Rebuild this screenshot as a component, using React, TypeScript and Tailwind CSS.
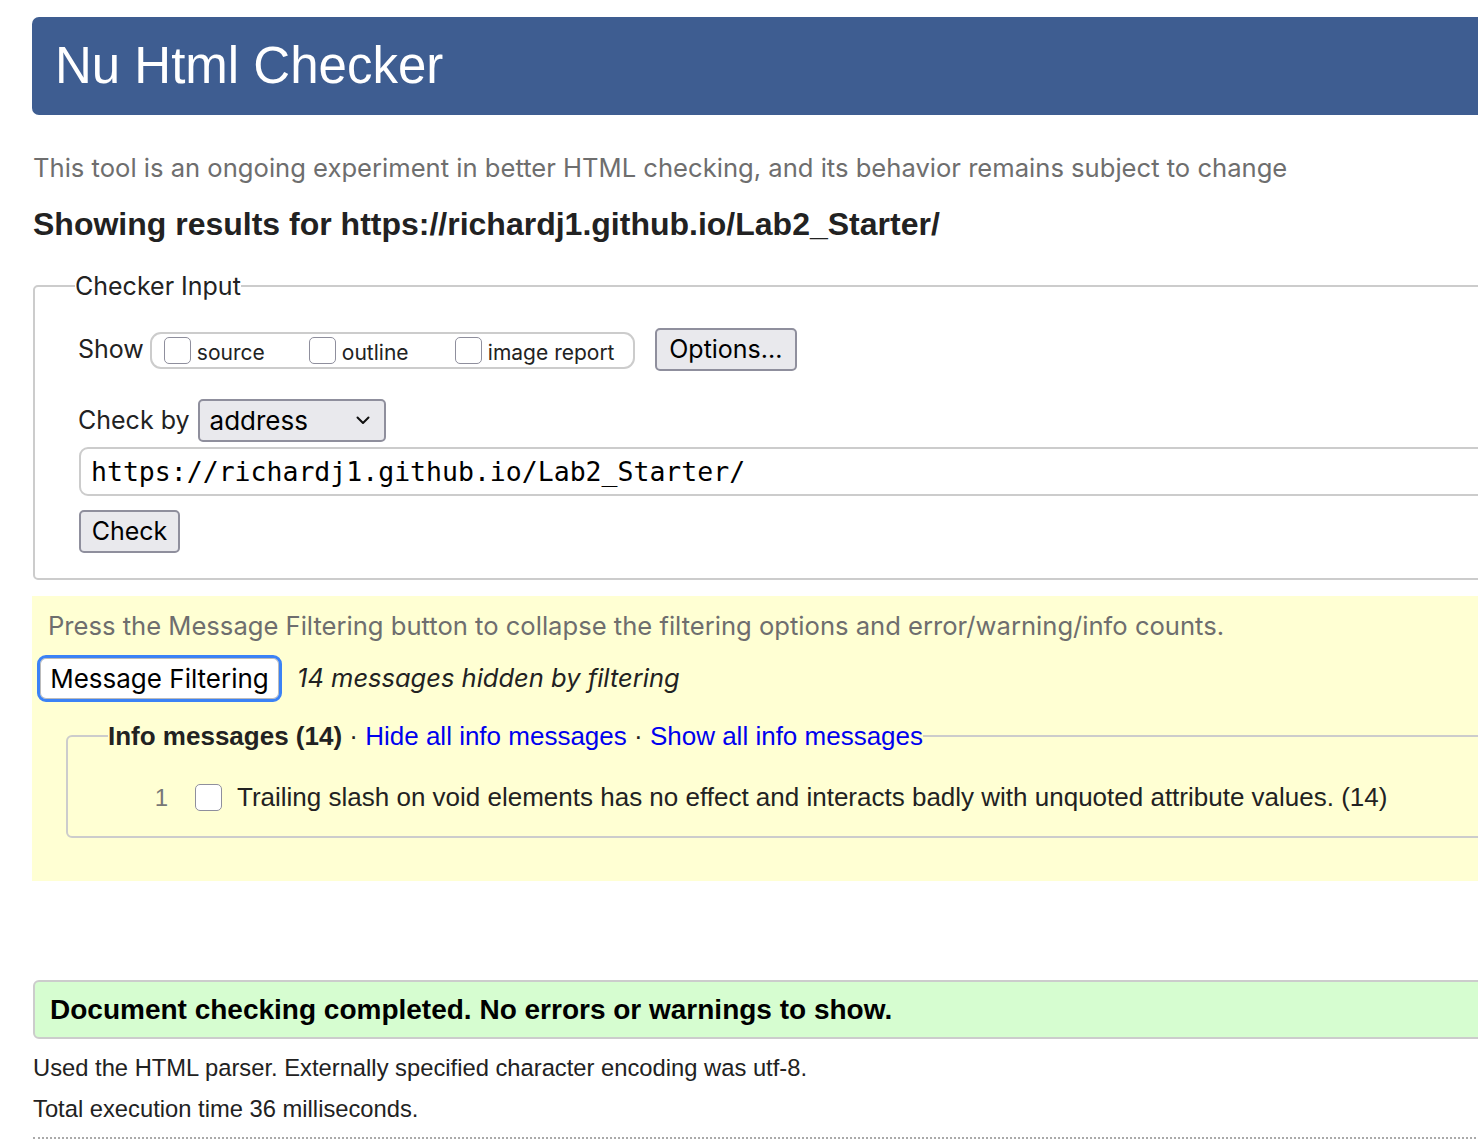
import React from "react";

const sans = "font-['Liberation_Sans',Arial,sans-serif]";
const ui = "font-['Inter','Noto_Sans',sans-serif]";

const Box = () => (
  <span className="inline-block w-[27px] h-[27px] rounded-[5px] border-[1.5px] border-[#8f8f9d] bg-white" />
);

const App = () => {
  return (
    <div className={`w-[1478px] h-[1140px] overflow-hidden bg-white text-[#222] ${sans}`}>
      <div className="w-[1560px] pl-[32px] pt-[17px]">
        <header className="h-[98px] rounded-[7px] bg-[#3e5d91] pl-[23px] flex items-center">
          <h1 className="text-[51px] text-white leading-none pb-[1px]">Nu Html Checker</h1>
        </header>

        <p className={`${ui} mt-[37px] ml-[1px] text-[25.6px] leading-[32px] text-[#6e6e6e]`}>
          This tool is an ongoing experiment in better HTML checking, and its behavior remains subject to change
        </p>

        <h2 className="mt-[22px] ml-[1px] text-[32px] leading-[36px] font-bold">
          Showing results for https://richardj1.github.io/Lab2_Starter/
        </h2>

        <fieldset className={`${ui} mt-[29px] ml-[1px] border-[2px] border-[#ccc] rounded-[5px] pl-[44px] pb-[25px]`}>
          <legend className="-ml-[4px] text-[25px] leading-[30px] text-[#222]">Checker Input</legend>

          <div className="flex items-center mt-[28px]">
            <span className="-ml-[1px] text-[25px] mr-[6px]">Show</span>
            <fieldset className="h-[37px] w-[485px] border-[2px] border-[#ccc] rounded-[11px] flex items-center pl-[12px]">
              <label className="flex items-center gap-[6px] text-[21px] w-[145px]">
                <Box />
                <span className="mt-[6px]">source</span>
              </label>
              <label className="flex items-center gap-[6px] text-[21px] w-[146px]">
                <Box />
                <span className="mt-[6px]">outline</span>
              </label>
              <label className="flex items-center gap-[6px] text-[21px]">
                <Box />
                <span className="mt-[6px]">image report</span>
              </label>
            </fieldset>
            <button className="ml-[20px] -mt-[1px] h-[43px] w-[142px] rounded-[5px] border-[2px] border-[#8f8f9d] bg-[#e9e9ed] text-[25px] text-black">
              Options...
            </button>
          </div>

          <div className="flex items-center mt-[28px]">
            <span className="-ml-[1px] text-[25px] mr-[8px]">Check by</span>
            <div className="h-[43px] w-[188px] rounded-[5px] border-[2px] border-[#8f8f9d] bg-[#e9e9ed] flex items-center pl-[10px] pr-[14px] justify-between">
              <span className="text-[26px] text-black">address</span>
              <svg width="14" height="9" viewBox="0 0 14 9" fill="none">
                <path d="M1.5 1.5 L7 7 L12.5 1.5" stroke="#111" strokeWidth="2" strokeLinecap="round" strokeLinejoin="round" />
              </svg>
            </div>
          </div>

          <div className="mt-[5px] h-[49px] rounded-[9px] border-[2px] border-[#ccc] flex items-center pl-[10px]">
            <span className="font-['DejaVu_Sans_Mono',monospace] text-[26.5px] text-black">
              https://richardj1.github.io/Lab2_Starter/
            </span>
          </div>

          <button className="mt-[14px] h-[43px] w-[101px] rounded-[5px] border-[2px] border-[#8f8f9d] bg-[#e9e9ed] text-[25px] text-black">
            Check
          </button>
        </fieldset>

        <section className="mt-[16px] h-[285px] bg-[#ffffd3] pt-[14px]">
          <p className={`${ui} ml-[16px] text-[25.6px] leading-[32px] text-[#6e6e6e]`}>
            Press the Message Filtering button to collapse the filtering options and error/warning/info counts.
          </p>
          <div className="flex items-center mt-[13px]">
            <button
              className={`${ui} ml-[5px] h-[47px] w-[245px] rounded-[9px] border-[3px] border-[#3b82f6] bg-white text-[26px] text-black shadow-[inset_0_0_0_1px_#bbb]`}
            >
              Message Filtering
            </button>
            <span className={`${ui} ml-[15px] text-[25.5px] italic text-[#222]`}>
              14 messages hidden by filtering
            </span>
          </div>

          <fieldset className="mt-[19px] ml-[34px] border-[2px] border-[#ccc] rounded-[6px] pl-[40px] h-[117px]">
            <legend className="text-[26px] leading-[30px]">
              <span className="font-bold">Info messages (14)</span>
              <span> · </span>
              <span className="text-[#0000ee]">Hide all info messages</span>
              <span> · </span>
              <span className="text-[#0000ee]">Show all info messages</span>
            </legend>
            <div className="flex items-center mt-[27px]">
              <span className="w-[60px] text-right text-[24px] text-[#777]">1</span>
              <span className="ml-[27px] flex items-center">
                <Box />
              </span>
              <span className="ml-[15px] text-[26px] text-[#222]">
                Trailing slash on void elements has no effect and interacts badly with unquoted attribute values. (14)
              </span>
            </div>
          </fieldset>
        </section>

        <div className="mt-[99px] ml-[1px] h-[59px] rounded-[6px] border-[2px] border-[#ccc] bg-[#d6fdd0] flex items-center pl-[15px]">
          <span className="text-[28px] font-bold text-black">
            Document checking completed. No errors or warnings to show.
          </span>
        </div>

        <p className="mt-[15px] ml-[1px] text-[23.75px] leading-[28px]">
          Used the HTML parser. Externally specified character encoding was utf-8.
        </p>
        <p className="mt-[13px] ml-[1px] text-[23.75px] leading-[28px]">
          Total execution time 36 milliseconds.
        </p>
        <div className="mt-[14px] ml-[1px] border-t-[2px] border-dotted border-[#aaa]" />
      </div>
    </div>
  );
};

export default App;
